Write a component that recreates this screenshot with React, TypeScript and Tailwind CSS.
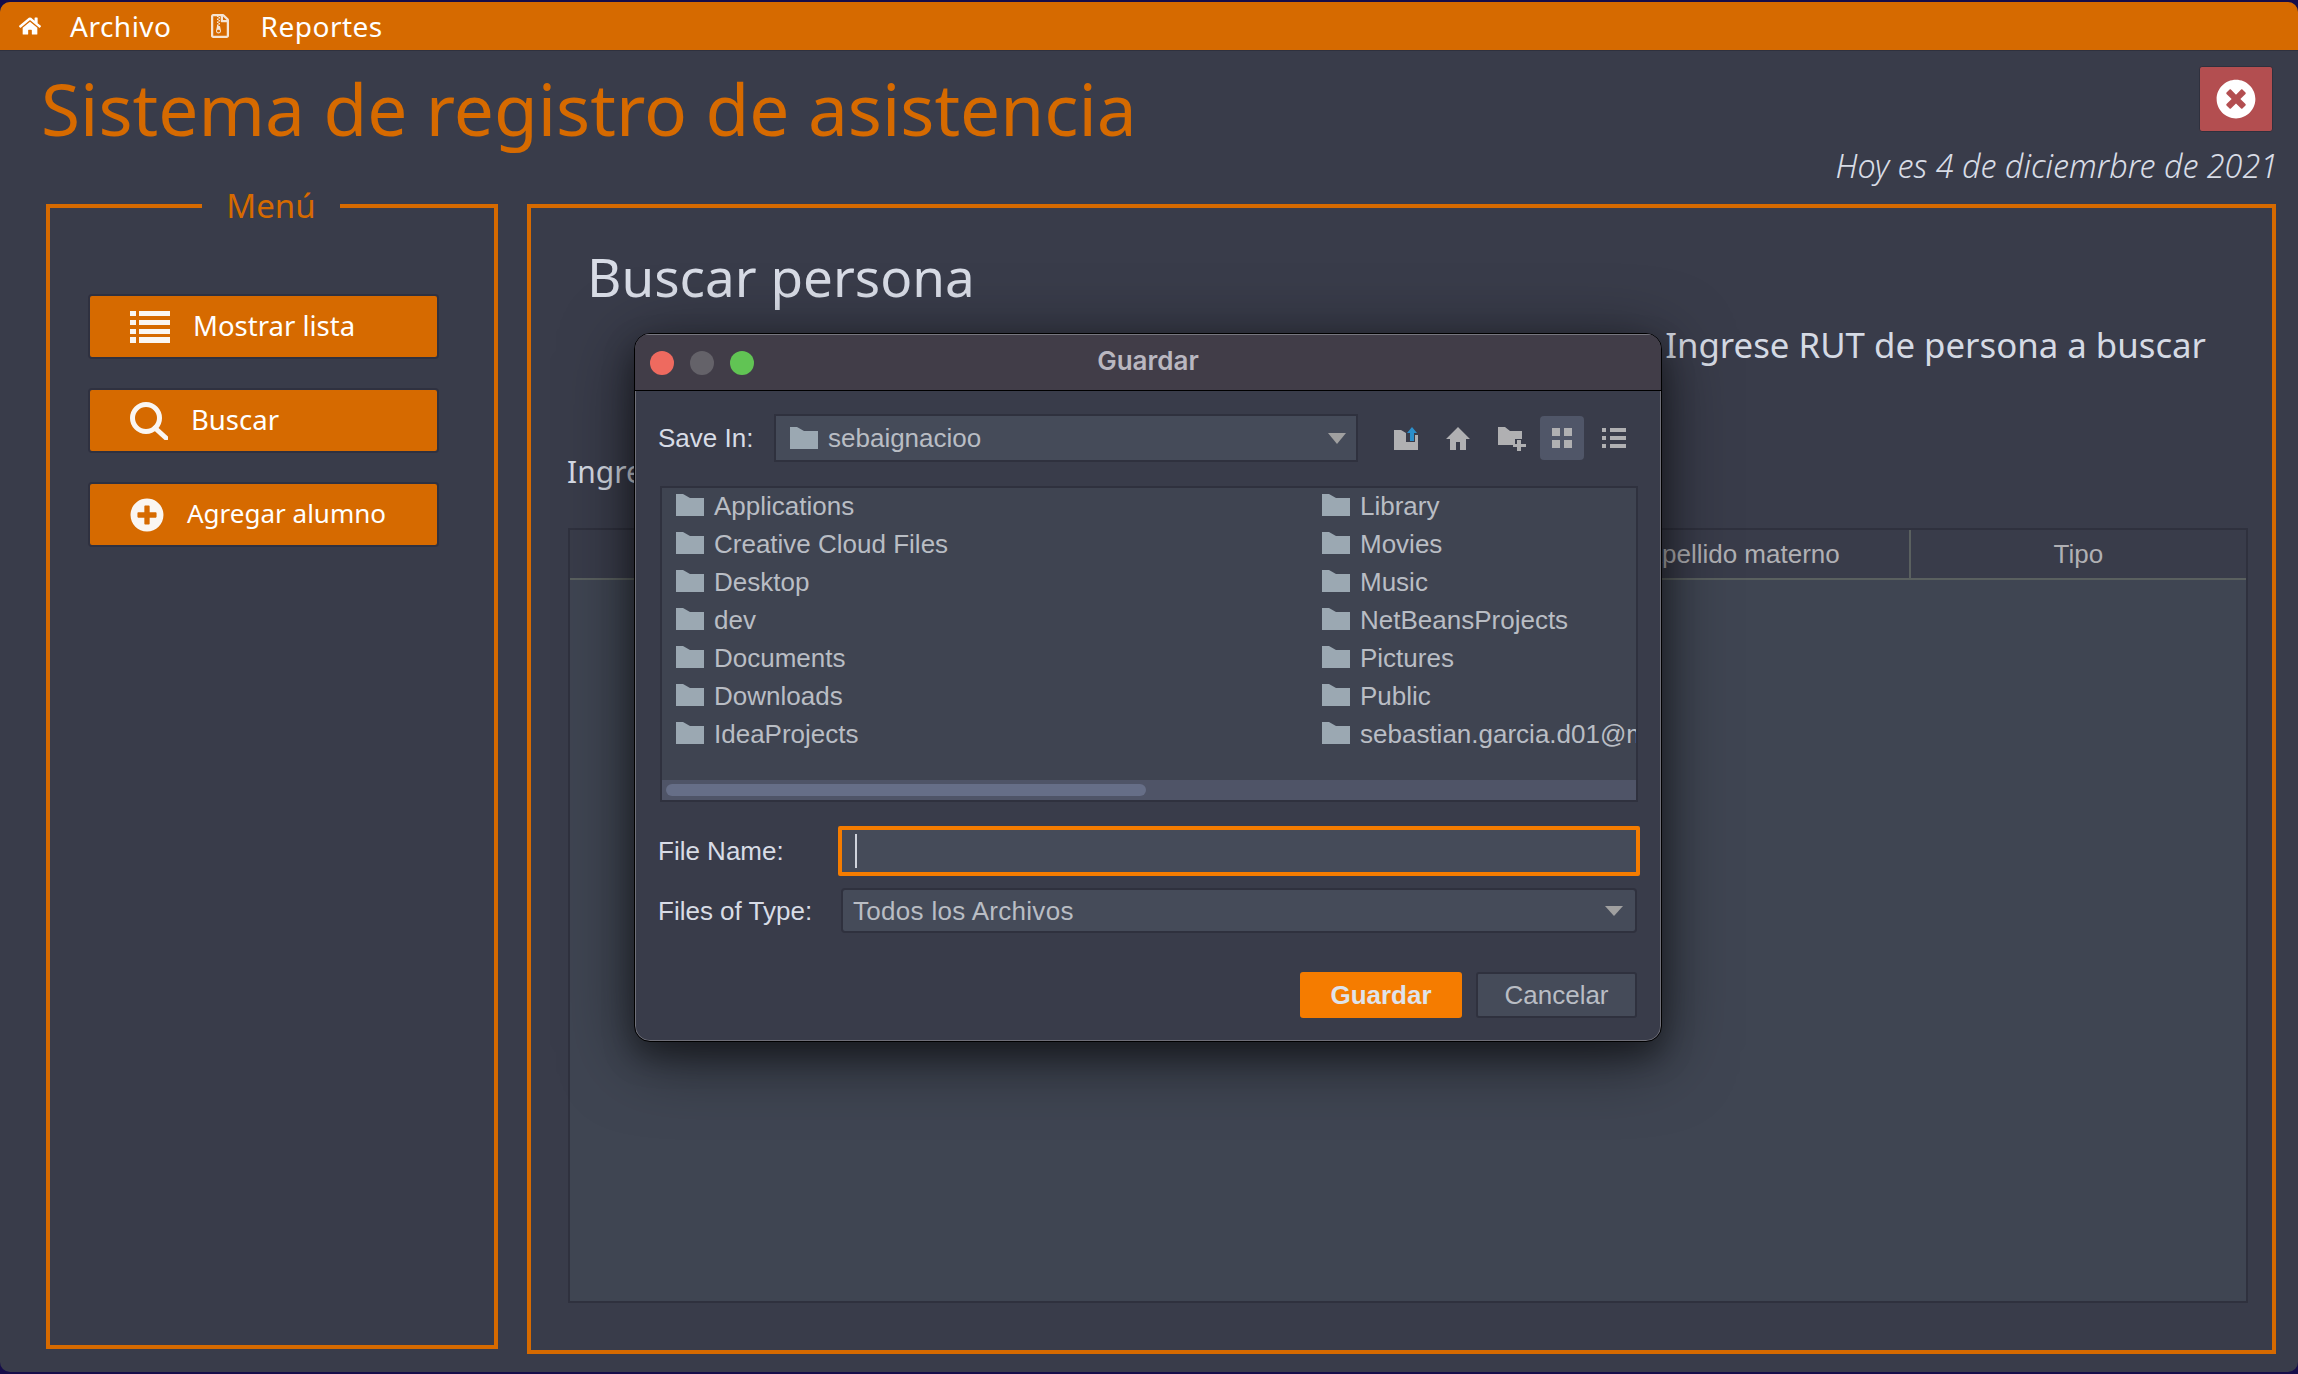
import { FaHome, FaPlusCircle, FaRegFileArchive, FaTimesCircle } from "react-icons/fa"

const appFont = "font-['Noto_Sans',sans-serif]"
const dialogFont = "font-['Liberation_Sans',Arial,sans-serif]"

const leftFolders = ["Applications", "Creative Cloud Files", "Desktop", "dev", "Documents", "Downloads", "IdeaProjects"]
const rightFolders = ["Library", "Movies", "Music", "NetBeansProjects", "Pictures", "Public", "sebastian.garcia.d01@mail.pucv.cl"]
const columns = ["RUT", "Nombre", "Apellido paterno", "Apellido materno", "Tipo"]

function FolderIcon() {
  return (
    <svg width="28" height="22" viewBox="0 0 28 22" className="shrink-0">
      <path d="M0 0H7L14 4H28V22H0Z" fill="#9ba8b2" />
    </svg>
  )
}

function ListIcon() {
  return (
    <svg width="40" height="32" viewBox="0 0 40 32" className="shrink-0" fill="#faf6f2">
      <rect x="0" y="0" width="6" height="5" />
      <rect x="9" y="0" width="31" height="5" />
      <rect x="0" y="9" width="6" height="5" />
      <rect x="9" y="9" width="31" height="5" />
      <rect x="0" y="18" width="6" height="5" />
      <rect x="9" y="18" width="31" height="5" />
      <rect x="0" y="26" width="6" height="6" />
      <rect x="9" y="26" width="31" height="6" />
    </svg>
  )
}

function SearchIcon() {
  return (
    <svg width="38" height="38" viewBox="0 0 38 38" className="shrink-0" fill="none" stroke="#faf6f2">
      <circle cx="16" cy="16" r="13.5" strokeWidth="5" />
      <path d="M25 26L36 36" strokeWidth="5" strokeLinecap="round" />
    </svg>
  )
}

function ToolbarIcons() {
  return (
    <div className="flex items-center ml-[36px]">
      <svg width="24" height="23" viewBox="0 0 24 23" className="shrink-0">
        <path d="M0 3H7L12 6V15H21V8H24V23H0Z" fill="#b0b0b2" />
        <path d="M18 0L23 6H20V14H16V6H13Z" fill="#2b8fcb" />
      </svg>
      <svg width="24" height="23" viewBox="0 0 24 23" className="shrink-0 ml-[28px]">
        <path d="M12 0L24 12H20V23H14V15H10V23H4V12H0Z" fill="#b0b0b2" />
      </svg>
      <svg width="28" height="26" viewBox="0 0 28 26" className="shrink-0 ml-[28px]">
        <path d="M0 2H7L12 6H24V14H17V20H0Z" fill="#b0b0b2" />
        <path d="M19 15H23V19H28V22H23V26H19V22H15V19H19Z" fill="#b0b0b2" />
      </svg>
      <div className="w-[44px] h-[44px] ml-[14px] rounded-[4px] bg-[#505668] flex items-center justify-center">
        <svg width="20" height="20" viewBox="0 0 20 20" fill="#b0b0b2">
          <rect x="0" y="0" width="8" height="8" />
          <rect x="12" y="0" width="8" height="8" />
          <rect x="0" y="12" width="8" height="8" />
          <rect x="12" y="12" width="8" height="8" />
        </svg>
      </div>
      <svg width="24" height="20" viewBox="0 0 24 20" className="shrink-0 ml-[18px]" fill="#b0b0b2">
        <rect x="0" y="0" width="4" height="4" />
        <rect x="8" y="0" width="16" height="4" />
        <rect x="0" y="8" width="4" height="4" />
        <rect x="8" y="8" width="16" height="4" />
        <rect x="0" y="16" width="4" height="4" />
        <rect x="8" y="16" width="16" height="4" />
      </svg>
    </div>
  )
}

function SaveDialog() {
  return (
    <div className={`absolute left-[634px] top-[333px] w-[1028px] h-[709px] rounded-[16px] border border-black bg-[#393c4a] overflow-hidden shadow-[inset_0_0_0_1px_#6f6f78,0_14px_30px_rgba(0,0,0,0.35),0_14px_70px_rgba(0,0,0,0.55)] ${dialogFont}`}>
      <div className="relative h-[57px] bg-[#413d48] border-t border-t-[#77777f] border-b border-b-black flex items-center gap-[16px] pl-[15px]">
        <span className="w-[24px] h-[24px] rounded-full bg-[#ee6a5f]" />
        <span className="w-[24px] h-[24px] rounded-full bg-[#646269]" />
        <span className="w-[24px] h-[24px] rounded-full bg-[#61c454]" />
        <span className="absolute inset-x-0 top-[11px] text-center text-[26px] leading-[30px] font-semibold text-[#b9b7c0] font-['Inter',sans-serif]">
          Guardar
        </span>
      </div>

      <div className="px-[23px] text-[26px] text-[#b9bdc4]">
        <div className="flex items-center mt-[23px]">
          <span className="w-[116px] shrink-0 text-[#d8dce6]">Save In:</span>
          <div className="w-[584px] h-[48px] shrink-0 border-2 border-[#2f313e] bg-[#454b59] flex items-center pl-[14px] pr-[10px]">
            <FolderIcon />
            <span className="ml-[10px] flex-1">sebaignacioo</span>
            <span className="w-0 h-0 border-x-[9px] border-x-transparent border-t-[11px] border-t-[#a0a0a0]" />
          </div>
          <ToolbarIcons />
        </div>

        <div className="ml-[2px] mt-[24px] w-[978px] h-[316px] border-2 border-[#2f313e] bg-[#3f4451] flex flex-col overflow-hidden">
          <div className="flex flex-1 min-h-0">
            <div className="w-[660px] shrink-0 pl-[14px] flex flex-col gap-[4px]">
              {leftFolders.map((name) => (
                <div key={name} className="h-[34px] flex items-center gap-[10px] whitespace-nowrap">
                  <FolderIcon />
                  <span className="pt-[2px]">{name}</span>
                </div>
              ))}
            </div>
            <div className="flex-1 min-w-0 overflow-hidden flex flex-col gap-[4px]">
              {rightFolders.map((name) => (
                <div key={name} className="h-[34px] flex items-center gap-[10px] whitespace-nowrap">
                  <FolderIcon />
                  <span className="pt-[2px]">{name}</span>
                </div>
              ))}
            </div>
          </div>
          <div className="h-[20px] shrink-0 bg-[#4f5467] flex items-center pl-[4px]">
            <div className="w-[480px] h-[12px] rounded-full bg-[#666e87]" />
          </div>
        </div>

        <div className="flex items-center mt-[24px]">
          <span className="w-[180px] shrink-0 text-[#d8dce6]">File Name:</span>
          <div className="w-[802px] h-[50px] shrink-0 border-4 border-[#f57c00] rounded-[2px] bg-[#454b59] flex items-center pl-[13px]">
            <span className="w-[2px] h-[34px] bg-[#cfd3dc]" />
          </div>
        </div>

        <div className="flex items-center mt-[12px]">
          <span className="w-[183px] shrink-0 pt-[1px] text-[#d8dce6]">Files of Type:</span>
          <div className="w-[796px] h-[45px] shrink-0 border-2 border-[#2f313e] rounded-[4px] bg-[#454b59] flex items-center justify-between pl-[10px] pr-[12px]">
            <span className="pt-[1px] tracking-[0.3px]">Todos los Archivos</span>
            <span className="w-0 h-0 border-x-[9px] border-x-transparent border-t-[10px] border-t-[#a0a0a0]" />
          </div>
        </div>

        <div className="flex justify-end gap-[14px] mt-[39px] pr-[1px]">
          <div className="w-[162px] h-[46px] rounded-[3px] bg-[#f57c00] flex items-center justify-center font-bold text-[#dfe3ea]">
            Guardar
          </div>
          <div className="w-[161px] h-[46px] rounded-[3px] border-2 border-[#2f313e] bg-[#454b59] flex items-center justify-center">
            Cancelar
          </div>
        </div>
      </div>
    </div>
  )
}

export default function App() {
  const menuButtons = [
    { label: "Mostrar lista", size: "text-[27.5px]", icon: <ListIcon /> },
    { label: "Buscar", size: "text-[27.5px]", icon: <SearchIcon /> },
    { label: "Agregar alumno", size: "text-[26px]", icon: <FaPlusCircle className="w-[34px] h-[34px] shrink-0 text-[#faf6f2]" /> },
  ]

  return (
    <div className={`relative w-[2298px] h-[1374px] overflow-hidden bg-[#160d4a] ${appFont}`}>
      <div className="h-[1370px] mt-[2px] rounded-[10px] overflow-hidden bg-[#393c4a] flex flex-col">
        <div className="h-[49px] shrink-0 bg-[#d66a00] border-b border-[#2f313e] flex items-center text-white text-[28px] tracking-[0.5px]">
          <FaHome className="ml-[19px] w-[22px] h-[20px] text-white" />
          <span className="ml-[29px] pb-[1px]">Archivo</span>
          <FaRegFileArchive className="ml-[38px] w-[20px] h-[24px] text-[#f5e4d4]" />
          <span className="ml-[31px] pb-[1px]">Reportes</span>
        </div>

        <div className="h-[138px] shrink-0 flex justify-between">
          <h1 className="ml-[41px] mt-[13px] text-[71.2px] leading-[90px] text-[#d66a00]">
            Sistema de registro de asistencia
          </h1>
          <div className="flex flex-col items-end">
            <div className="mt-[15px] mr-[25px] w-[74px] h-[66px] rounded-[3px] border border-[#2f313e] bg-[#b34e50] flex items-center justify-center">
              <FaTimesCircle className="w-[40px] h-[40px] text-white" />
            </div>
            <span className="mt-[13px] mr-[20px] text-[32.3px] leading-[40px] italic font-light text-[#d8dce6]">
              Hoy es 4 de diciemrbre de 2021
            </span>
          </div>
        </div>

        <div className="flex items-start pl-[46px] gap-[29px]">
          <fieldset className="w-[452px] h-[1160px] shrink-0 border-4 border-[#d66a00]">
            <legend className="ml-[152px] w-[138px] h-[34px] text-[33px] leading-[34px] text-[#d66a00]">
              <span className="flex justify-center">Menú</span>
            </legend>
            <div className="ml-[38px] mt-[71px] flex flex-col gap-[29px] w-[351px]">
              {menuButtons.map((b) => (
                <div key={b.label} className={`h-[65px] rounded-[4px] border-2 border-[#2f3140] bg-[#d66a00] flex items-center gap-[23px] pl-[40px] text-white ${b.size}`}>
                  {b.icon}
                  <span className="pb-[2px]">{b.label}</span>
                </div>
              ))}
            </div>
          </fieldset>

          <div className="mt-[15px] w-[1749px] h-[1150px] shrink-0 border-4 border-[#d66a00] flex flex-col">
            <h2 className="ml-[56px] mt-[37px] h-[64px] text-[53px] leading-[64px] text-[#d8dce6]">Buscar persona</h2>
            <p className="self-end mr-[66px] mt-[16px] h-[40px] text-[34.8px] leading-[40px] text-[#d5dae4]">
              Ingrese RUT de persona a buscar
            </p>
            <p className="ml-[36px] mt-[87px] h-[40px] text-[30px] leading-[40px] text-[#d5dae4]">Ingrese RUT</p>
            <div className="ml-[37px] mt-[36px] w-[1680px] h-[775px] border-2 border-[#2f313e] bg-[#3f4552] flex flex-col">
              <div className={`grid grid-cols-5 h-[50px] shrink-0 bg-[#393c4a] border-b-2 border-[#5a605f] text-[26px] text-[#b0b0b4] ${dialogFont}`}>
                {columns.map((c, i) => (
                  <div key={c} className={`flex items-center justify-center pt-[1px] ${i < 4 ? "border-r-2 border-[#5a605f]" : ""}`}>
                    {c}
                  </div>
                ))}
              </div>
            </div>
          </div>
        </div>
      </div>

      <SaveDialog />
    </div>
  )
}
